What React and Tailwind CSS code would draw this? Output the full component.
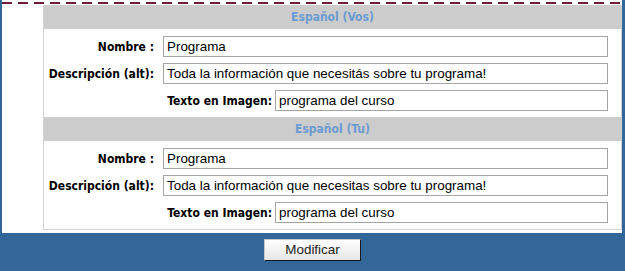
import React from 'react';

const labelFont = { fontFamily: '"DejaVu Sans Condensed", "DejaVu Sans", sans-serif' };

const Field = ({ value, className }) => (
  <div
    className={`h-[21px] border border-[#a5a5a5] bg-white pl-[3px] text-[13.4px] leading-[19px] text-black font-['Liberation_Sans',Arial,sans-serif] ${className}`}
  >
    {value}
  </div>
);

const Section = ({ title, nombre, descripcion, texto }) => (
  <div>
    <div className="h-[24px] bg-[#cccccc] flex items-center justify-center">
      <span className="text-[12px] font-bold text-[#6b9bd2]" style={labelFont}>{title}</span>
    </div>
    <div className="pt-[4px] pb-[3px]">
      <div className="h-[27px] flex items-center">
        <div className="w-[110px] text-right text-[12px] font-bold text-black" style={labelFont}>Nombre :</div>
        <Field value={nombre} className="ml-[9px] w-[445px]" />
      </div>
      <div className="h-[27px] flex items-center">
        <div className="w-[110px] text-right text-[12px] font-bold text-black whitespace-nowrap" style={labelFont}>Descripción (alt):</div>
        <Field value={descripcion} className="ml-[9px] w-[445px]" />
      </div>
      <div className="h-[27px] flex items-center">
        <div className="w-[228px] text-right text-[12px] font-bold text-black" style={labelFont}>Texto en Imagen:</div>
        <Field value={texto} className="ml-[3px] w-[333px]" />
      </div>
    </div>
  </div>
);

const App = () => {
  return (
    <div className="w-[625px] h-[271px] bg-[#336699] flex flex-col overflow-hidden">
      <div className="ml-[2px] mr-[3px] bg-white pb-[3px]">
        <div className="h-[2px] mt-[2px] bg-[repeating-linear-gradient(90deg,#6b1f35_0px,#6b1f35_10px,transparent_10px,transparent_16px)]" />
        <div className="ml-[41px] mt-[1px] border-l border-r border-b border-[#d4d4d4]">
          <Section
            title="Español (Vos)"
            nombre="Programa"
            descripcion="Toda la información que necesitás sobre tu programa!"
            texto="programa del curso"
          />
          <Section
            title="Español (Tu)"
            nombre="Programa"
            descripcion="Toda la información que necesitas sobre tu programa!"
            texto="programa del curso"
          />
        </div>
      </div>
      <div className="flex justify-center pt-[6px]">
        <button className="w-[97px] h-[22px] border border-t-[#c8c8c8] border-l-[#c8c8c8] border-r-[#1a1a1a] border-b-[#1a1a1a] bg-[linear-gradient(#ffffff,#e6e6e6)] text-[13.4px] text-[#222] font-['Liberation_Sans',Arial,sans-serif]">
          Modificar
        </button>
      </div>
    </div>
  );
};

export default App;
